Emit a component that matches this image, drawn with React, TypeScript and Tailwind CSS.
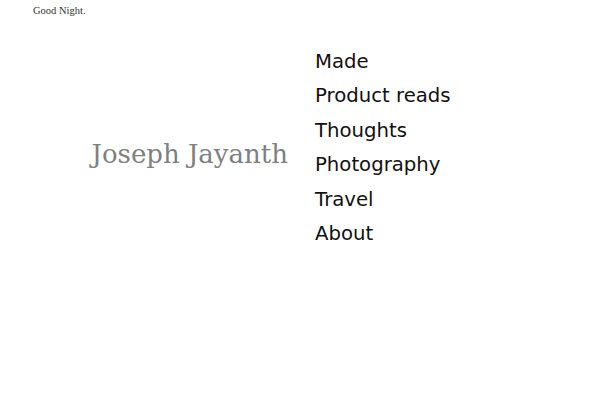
export default function App() {
  const links = ["Made", "Product reads", "Thoughts", "Photography", "Travel", "About"];

  return (
    <div className="h-[400px] w-[600px] bg-white">
      <header className="px-[33px] pt-[4px] font-['Liberation_Serif',serif] text-[10.5px] leading-[14px] text-[#333]">
        Good Night.
      </header>

      <main className="mt-[27px] flex items-center">
        <h1 className="mt-[11px] w-[288px] text-right font-['DejaVu_Serif',serif] text-[26px] leading-[32px] text-[#808080]">
          Joseph Jayanth
        </h1>
        <nav className="ml-[27px] font-['DejaVu_Sans',sans-serif] text-[19.7px] leading-[34.4px] text-[#111]">
          {links.map((l) => (
            <a key={l} href="#" className="block">
              {l}
            </a>
          ))}
        </nav>
      </main>
    </div>
  );
}
